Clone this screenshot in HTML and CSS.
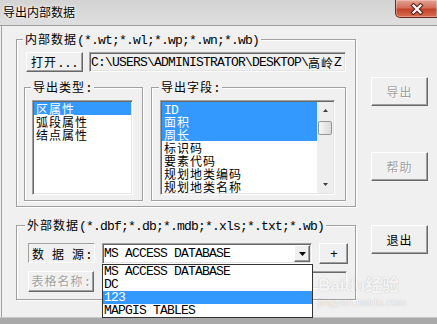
FILE: index.html
```html
<!DOCTYPE html>
<html lang="zh-CN">
<head>
    <meta charset="UTF-8">
    <title>导出内部数据</title>
    <link rel="stylesheet" href="styles.css">
</head>
<body>
<div class="window">
    <div class="titlebar">
        <span class="title">导出内部数据</span>
        <div class="close">
            <svg width="14" height="12" viewBox="0 0 14 12">
                <path d="M3.5 2.5 L10.5 9.5 M10.5 2.5 L3.5 9.5" stroke="#4a1d15" stroke-width="4.2" stroke-linecap="square"/>
                <path d="M3.5 2.5 L10.5 9.5 M10.5 2.5 L3.5 9.5" stroke="#fff" stroke-width="2.2" stroke-linecap="square"/>
            </svg>
        </div>
    </div>

    <div class="client">
        <div class="main">
            <fieldset class="group inner-data">
                <legend>内部数据<span class="a">(*.wt;*.wl;*.wp;*.wn;*.wb)</span></legend>
                <div class="file-row">
                    <button class="btn open">打开<span class="a">...</span></button>
                    <div class="edit path"><span class="a">C:\USERS\ADMINISTRATOR\DESKTOP\</span>高岭<span class="a">Z</span></div>
                </div>
                <div class="lists">
                    <fieldset class="group types">
                        <legend>导出类型<span class="a">:</span></legend>
                        <div class="listbox">
                            <ul class="items">
                                <li class="sel">区属性</li>
                                <li>弧段属性</li>
                                <li>结点属性</li>
                            </ul>
                        </div>
                    </fieldset>
                    <fieldset class="group fields">
                        <legend>导出字段<span class="a">:</span></legend>
                        <div class="listbox">
                            <ul class="items">
                                <li class="sel"><span class="a">ID</span></li>
                                <li class="sel">面积</li>
                                <li class="sel">周长</li>
                                <li>标识码</li>
                                <li>要素代码</li>
                                <li>规划地类编码</li>
                                <li>规划地类名称</li>
                            </ul>
                            <div class="vscroll">
                                <div class="arrow"><svg width="5" height="3" viewBox="0 0 5 3"><path d="M0 3h5L2.5 0z" fill="#404040"/></svg></div>
                                <div class="thumb"></div>
                                <div class="track"></div>
                                <div class="arrow"><svg width="5" height="3" viewBox="0 0 5 3"><path d="M0 0h5L2.5 3z" fill="#404040"/></svg></div>
                            </div>
                        </div>
                    </fieldset>
                </div>
            </fieldset>

            <fieldset class="group outer-data">
                <legend>外部数据<span class="a">(*.dbf;*.db;*.mdb;*.xls;*.txt;*.wb)</span></legend>
                <div class="src-row">
                    <div class="static">数<span class="a"> </span>据<span class="a"> </span>源<span class="a">:</span></div>
                    <div class="combo">
                        <span class="a">MS ACCESS DATABASE</span>
                        <div class="drop-btn"><svg width="7" height="4" viewBox="0 0 7 4"><path d="M0 0h7L3.5 4z" fill="#000"/></svg></div>
                        <ul class="dropdown">
                            <li class="a">MS ACCESS DATABASE</li>
                            <li class="a">DC</li>
                            <li class="a sel">123</li>
                            <li class="a">MAPGIS TABLES</li>
                        </ul>
                    </div>
                    <button class="btn plus"><span class="a">+</span></button>
                </div>
                <div class="table-row">
                    <button class="btn name" disabled>表格名称<span class="a">:</span></button>
                    <div class="edit table-name"></div>
                </div>
            </fieldset>
        </div>

        <div class="side">
            <button class="btn" disabled>导出</button>
            <button class="btn help" disabled>帮助</button>
            <button class="btn quit">退出</button>
        </div>
    </div>
    <div class="bottom"></div>

    <div class="watermark">
        <div class="wm-logo">Bai<span class="du">du</span>经验</div>
        <div class="wm-url">jingyan.baidu.com</div>
    </div>
</div>
</body>
</html>
```

FILE: styles.css
```css
* {
    box-sizing: border-box;
}
body {
    margin: 0;
    background: #f0f0f0;
    font-family: "Noto Sans CJK SC", sans-serif;
    font-size: 12px;
    letter-spacing: 1px;
    line-height: 13px;
    color: #000;
}
.a {
    font-family: "Liberation Mono", "Noto Sans CJK SC", monospace;
    font-size: 13px;
    letter-spacing: -0.8px;
}
.window {
    position: relative;
    width: 437px;
    height: 324px;
    overflow: hidden;
    background: #f0f0f0;
}

/* title bar */
.titlebar {
    display: flex;
    justify-content: space-between;
    height: 26px;
    background: linear-gradient(#d3d3d3, #dfdfdf);
    border-bottom: 1px solid #9c9c9c;
}
.title {
    font-size: 12px;
    letter-spacing: 0;
    line-height: 12px;
    padding: 6px 0 0 3px;
    text-shadow: 0 0 4px #fff, 0 0 2px #fff;
}
.close {
    display: flex;
    justify-content: center;
    align-items: center;
    width: 43px;
    height: 18px;
    margin-right: -1px;
    border: 1px solid #6f2a20;
    border-top: none;
    border-radius: 0 0 0 5px;
    background: linear-gradient(#e3a292, #d46f5a 45%, #c3432b 55%, #d86d4f);
    box-shadow: inset 0 0 0 1px rgba(255, 255, 255, 0.3);
}

/* client area */
.client {
    display: flex;
    height: 291px;
    margin-left: 1px;
    border-left: 1px solid #a0a0a0;
}
.main {
    width: 354px;
    padding: 6px 0 0 14px;
}
.side {
    display: flex;
    flex-direction: column;
    padding: 51px 0 0 15px;
}
.side .btn {
    width: 57px;
    height: 29px;
}
.side .help {
    margin-top: 46px;
}
.side .quit {
    margin-top: 44px;
}
.bottom {
    height: 7px;
    background: #a9a9a9;
    border-top: 1px solid #c8c8c8;
}

/* group boxes */
.group {
    margin: 0;
    padding: 0;
    min-width: 0;
    border: 1px solid #a0a0a0;
    box-shadow: inset 1px 1px 0 #fff, 1px 1px 0 #fff;
}
.group legend {
    height: 14px;
    line-height: 14px;
    padding: 0 2px;
    margin-left: -3px;
    background: #f0f0f0;
    white-space: nowrap;
}
.inner-data {
    width: 340px;
    padding: 6px 9px 5px 9px;
}
.outer-data {
    width: 340px;
    margin-top: 11px;
    padding: 11px 7px 7px 11px;
}
.types {
    width: 119px;
    padding: 6px 9px 5px 7px;
}
.fields {
    width: 195px;
    padding: 6px 10px 5px 8px;
}
.types legend,
.fields legend {
    margin-left: -1px;
}

/* buttons */
.btn {
    margin: 0;
    padding: 0;
    font: inherit;
    letter-spacing: inherit;
    color: #000;
    background: #f0f0f0;
    border: 1px solid;
    border-color: #fff #696969 #696969 #fff;
    box-shadow: inset -1px -1px 0 #a0a0a0;
}
.btn:disabled {
    color: #a0a0a0;
    text-shadow: 1px 1px 0 #fff;
}

/* sunken edits */
.edit {
    display: flex;
    align-items: center;
    padding: 1px;
    background: #f0f0f0;
    border: 1px solid;
    border-color: #a0a0a0 #fff #fff #a0a0a0;
    box-shadow: inset 1px 1px 0 #696969, inset -1px -1px 0 #e3e3e3;
    white-space: nowrap;
    overflow: hidden;
}

.file-row {
    display: flex;
    gap: 6px;
    height: 20px;
}
.open {
    width: 57px;
    height: 20px;
}
.path {
    width: 257px;
    height: 20px;
}

.lists {
    display: flex;
    gap: 8px;
    margin: 8px 0 0 -2px;
}

/* list boxes */
.listbox {
    display: flex;
    height: 95px;
    padding: 1px;
    background: #fff;
    border: 1px solid;
    border-color: #a0a0a0 #fff #fff #a0a0a0;
    box-shadow: inset 1px 1px 0 #696969, inset -1px -1px 0 #e3e3e3;
}
.types .listbox {
    width: 101px;
}
.fields .listbox {
    width: 175px;
}
.items {
    flex: 1;
    list-style: none;
    margin: 0;
    padding: 0;
    overflow: hidden;
}
.items li {
    height: 13px;
    padding-left: 2px;
    white-space: nowrap;
    overflow: hidden;
}
.sel {
    background: #3399ff;
    color: #fff;
}
.vscroll {
    display: flex;
    flex-direction: column;
    align-items: center;
    width: 16px;
    background: #eeeeee;
}
.vscroll .arrow {
    display: flex;
    justify-content: center;
    align-items: center;
    height: 17px;
}
.vscroll .thumb {
    width: 14px;
    height: 14px;
    margin-top: 2px;
    border: 1px solid #979797;
    border-radius: 2px;
    background: linear-gradient(to right, #f6f6f6, #dadada);
}
.vscroll .track {
    flex: 1;
}

/* external data */
.src-row {
    display: flex;
    align-items: flex-start;
    gap: 7px;
}
.static {
    width: 67px;
    height: 20px;
    padding: 3px 0 0 3px;
    border: 1px solid;
    border-color: #a0a0a0 #fff #fff #a0a0a0;
    white-space: nowrap;
}
.combo {
    position: relative;
    display: flex;
    align-items: center;
    width: 210px;
    height: 21px;
    padding: 1px;
    background: #fff;
    border: 1px solid;
    border-color: #a0a0a0 #fff #fff #a0a0a0;
    box-shadow: inset 1px 1px 0 #696969, inset -1px -1px 0 #e3e3e3;
}
.drop-btn {
    display: flex;
    justify-content: center;
    align-items: center;
    width: 16px;
    height: 17px;
    margin-left: auto;
    background: #f0f0f0;
    border: 1px solid;
    border-color: #fff #696969 #696969 #fff;
    box-shadow: inset -1px -1px 0 #a0a0a0;
}
.dropdown {
    position: absolute;
    left: -1px;
    top: 20px;
    z-index: 2;
    width: 211px;
    height: 54px;
    margin: 0;
    padding: 0;
    list-style: none;
    background: #fff;
    border: 1px solid #333;
}
.dropdown li {
    height: 13px;
    padding-left: 1px;
    white-space: nowrap;
}
.plus {
    width: 29px;
    height: 21px;
}
.table-row {
    display: flex;
    gap: 8px;
    margin-top: 7px;
}
.name {
    width: 66px;
    height: 21px;
}
.table-name {
    width: 245px;
    height: 18px;
}

/* baidu watermark */
.watermark {
    position: absolute;
    left: 318px;
    top: 276px;
    letter-spacing: 0;
    color: rgba(255, 255, 255, 0.9);
    text-shadow: 0 0 1px rgba(0, 0, 0, 0.3);
    pointer-events: none;
}
.wm-logo {
    font-family: "Liberation Sans", "Noto Sans CJK SC", sans-serif;
    font-weight: bold;
    font-size: 17px;
    line-height: 20px;
}
.wm-url {
    font-family: "Liberation Sans", sans-serif;
    font-size: 11px;
    line-height: 12px;
}
```
